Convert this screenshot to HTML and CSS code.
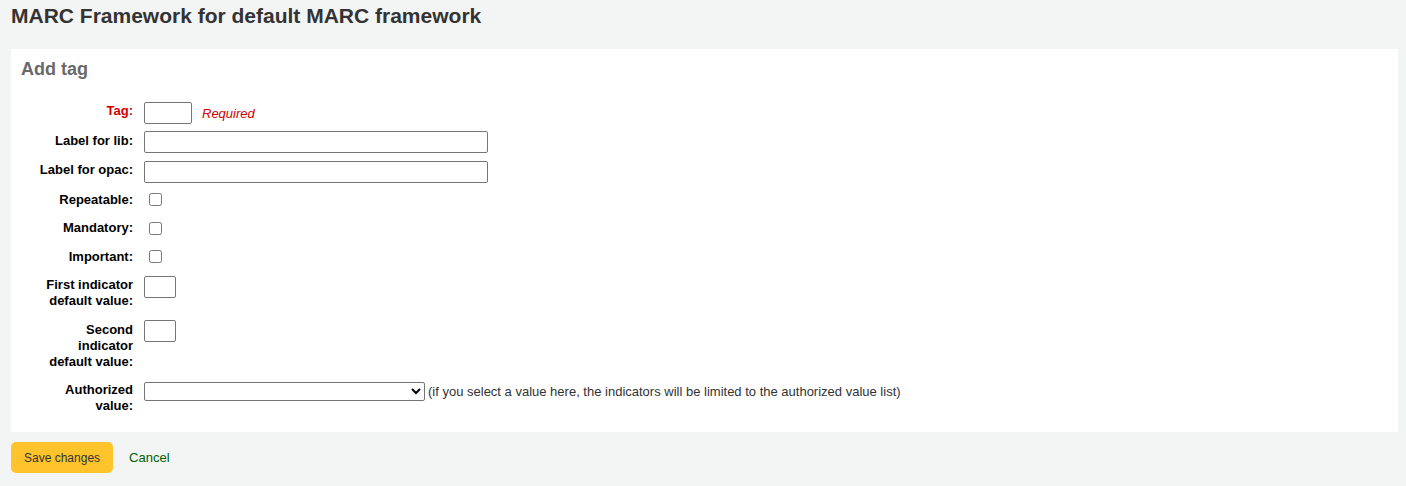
FILE: index.html
```html
<!DOCTYPE html>
<html lang="en">
<head>
<meta charset="utf-8">
<title>MARC Framework</title>
<link rel="stylesheet" href="styles.css">
</head>
<body>
<main class="page">
  <h1 class="title">MARC Framework for default MARC framework</h1>
  <form class="panel">
    <h2 class="legend">Add tag</h2>
    <ol class="rows">
      <li class="row">
        <label class="lbl required" for="tag">Tag:</label>
        <div class="field">
          <input class="txt w-tag" type="text" id="tag">
          <span class="req">Required</span>
        </div>
      </li>
      <li class="row">
        <label class="lbl" for="lib">Label for lib:</label>
        <div class="field"><input class="txt w-long" type="text" id="lib"></div>
      </li>
      <li class="row">
        <label class="lbl" for="opac">Label for opac:</label>
        <div class="field"><input class="txt w-long" type="text" id="opac"></div>
      </li>
      <li class="row">
        <label class="lbl" for="rep">Repeatable:</label>
        <div class="field"><input class="chk" type="checkbox" id="rep"></div>
      </li>
      <li class="row">
        <label class="lbl" for="man">Mandatory:</label>
        <div class="field"><input class="chk" type="checkbox" id="man"></div>
      </li>
      <li class="row">
        <label class="lbl" for="imp">Important:</label>
        <div class="field"><input class="chk" type="checkbox" id="imp"></div>
      </li>
      <li class="row">
        <label class="lbl" for="ind1">First indicator default value:</label>
        <div class="field"><input class="txt w-ind" type="text" id="ind1"></div>
      </li>
      <li class="row">
        <label class="lbl" for="ind2">Second indicator default value:</label>
        <div class="field"><input class="txt w-ind" type="text" id="ind2"></div>
      </li>
      <li class="row">
        <label class="lbl" for="av">Authorized value:</label>
        <div class="field field-av">
          <select class="sel" id="av"><option value=""></option></select>
          <span class="hint">(if you select a value here, the indicators will be limited to the authorized value list)</span>
        </div>
      </li>
    </ol>
  </form>
  <div class="actions">
    <button class="btn-save" type="button">Save changes</button>
    <a class="cancel" href="#">Cancel</a>
  </div>
</main>
</body>
</html>
```

FILE: styles.css
```css
html, body {
  margin: 0;
  padding: 0;
  background: #f3f4f4;
}

body {
  font-family: "Liberation Sans", Arial, sans-serif;
  font-size: 13px;
  color: #333;
}

.page {
  padding: 4px 8px 0 11px;
}

.title {
  margin: 0;
  font-size: 21px;
  line-height: 24px;
  font-weight: bold;
  color: #333;
}

.panel {
  margin-top: 21px;
  background: #fff;
  padding: 10px 10px 11.5px 10px;
}

.legend {
  margin: 0 0 17px 0;
  font-size: 18px;
  line-height: 21px;
  font-weight: bold;
  color: #696969;
}

.rows {
  list-style: none;
  margin: 0;
  padding: 0 0 0 12px;
}

.row {
  display: grid;
  grid-template-columns: 100px 1fr;
  column-gap: 11px;
  align-items: start;
  padding: 4.5px 0 3px 0;
}

.lbl {
  font-weight: bold;
  color: #000;
  text-align: right;
  line-height: 16px;
  padding: 1.5px 0 3.5px 0;
}

.lbl.required {
  color: #cc0000;
}

.field {
  display: flex;
  align-items: center;
  min-height: 21px;
}

.txt {
  box-sizing: border-box;
  height: 22px;
  margin: 0;
  padding: 1px 2px;
  border: 1px solid #767676;
  border-radius: 2px;
  font-family: "Liberation Sans", Arial, sans-serif;
  font-size: 13px;
  background: #fff;
}

.w-tag { width: 48px; }
.w-long { width: 344px; }
.w-ind { width: 32px; }

.req {
  margin-left: 10px;
  margin-top: 2px;
  color: #cc0000;
  font-style: italic;
}

.chk {
  width: 13px;
  height: 13px;
  margin: 3px 0 0 5px;
  align-self: flex-start;
}

.field-av {
  align-items: center;
}

.sel {
  box-sizing: border-box;
  width: 281px;
  height: 19px;
  margin: 1px 0 0 0;
  font-family: "Liberation Sans", Arial, sans-serif;
  font-size: 13px;
  border: 1px solid #767676;
  border-radius: 2px;
  background: #fff;
}

.hint {
  margin-left: 3px;
  color: #333;
}

.actions {
  display: flex;
  align-items: center;
  gap: 16px;
  margin-top: 10px;
}

.btn-save {
  height: 31px;
  padding: 0 13px;
  border: 0;
  border-radius: 5px;
  background: #ffc32b;
  color: #333;
  font-family: "Liberation Sans", Arial, sans-serif;
  font-size: 12px;
}

.cancel {
  color: #006100;
  text-decoration: none;
  font-size: 13px;
}
```
